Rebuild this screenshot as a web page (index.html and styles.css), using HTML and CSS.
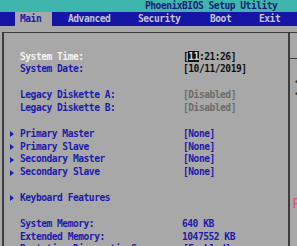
FILE: index.html
```html
<!DOCTYPE html>
<html>
<head>
<meta charset="utf-8">
<link rel="stylesheet" href="styles.css">
</head>
<body>
<div class="title">PhoenixBIOS Setup Utility</div>
<div class="menu">
  <span class="tab tab-main active">Main</span>
  <span class="tab tab-adv">Advanced</span>
  <span class="tab tab-sec">Security</span>
  <span class="tab tab-boot">Boot</span>
  <span class="tab tab-exit">Exit</span>
</div>
<div class="screen">
  <div class="main">
    <div class="row"><span class="bullet"></span><span class="label current">System Time:</span><span class="value black">[<span class="cursor">11</span>:21:26]</span></div>
    <div class="row"><span class="bullet"></span><span class="label">System Date:</span><span class="value black">[10/11/2019]</span></div>
    <div class="row"></div>
    <div class="row"><span class="bullet"></span><span class="label">Legacy Diskette A:</span><span class="value gray">[Disabled]</span></div>
    <div class="row"><span class="bullet"></span><span class="label">Legacy Diskette B:</span><span class="value gray">[Disabled]</span></div>
    <div class="row"></div>
    <div class="row"><span class="bullet"><svg class="tri" viewBox="0 0 4 6"><polygon points="0,0 4,3 0,6"/></svg></span><span class="label">Primary Master</span><span class="value">[None]</span></div>
    <div class="row"><span class="bullet"><svg class="tri" viewBox="0 0 4 6"><polygon points="0,0 4,3 0,6"/></svg></span><span class="label">Primary Slave</span><span class="value">[None]</span></div>
    <div class="row"><span class="bullet"><svg class="tri" viewBox="0 0 4 6"><polygon points="0,0 4,3 0,6"/></svg></span><span class="label">Secondary Master</span><span class="value">[None]</span></div>
    <div class="row"><span class="bullet"><svg class="tri" viewBox="0 0 4 6"><polygon points="0,0 4,3 0,6"/></svg></span><span class="label">Secondary Slave</span><span class="value">[None]</span></div>
    <div class="row"></div>
    <div class="row"><span class="bullet"><svg class="tri" viewBox="0 0 4 6"><polygon points="0,0 4,3 0,6"/></svg></span><span class="label">Keyboard Features</span></div>
    <div class="row"></div>
    <div class="row"><span class="bullet"></span><span class="label">System Memory:</span><span class="value mem">640 KB</span></div>
    <div class="row"><span class="bullet"></span><span class="label">Extended Memory:</span><span class="value mem">1047552 KB</span></div>
    <div class="row"><span class="bullet"></span><span class="label">Boot-time Diagnostic Screen:</span><span class="value">[Enabled]</span></div>
  </div>
  <div class="help">
    <div class="help-head"></div>
    <div class="help-body">
      <div class="help-line">&lt;Enter&gt;</div>
      <div class="help-line">&lt;Tab&gt;</div>
      <div class="help-mark">F</div>
    </div>
  </div>
</div>
</body>
</html>
```
FILE: styles.css
```css
html, body {
  margin: 0;
  padding: 0;
}
body {
  width: 297px;
  height: 246px;
  overflow: hidden;
  background: #a8a8a8;
  font-family: "DejaVu Sans Mono", "Liberation Mono", monospace;
  font-weight: bold;
  font-size: 9.6px;
  letter-spacing: -0.48px;
}
.title {
  height: 12px;
  line-height: 12px;
  background: #3fb6ad;
  color: #1c1c78;
  padding-left: 145px;
  white-space: nowrap;
}
.menu {
  height: 14px;
  line-height: 14px;
  background: #1616a6;
  display: flex;
  padding-left: 15px;
  white-space: nowrap;
}
.tab {
  color: #c4c4d4;
  padding-left: 5px;
  box-sizing: border-box;
}
.tab.active {
  background: #a8a8a8;
  color: #1c1caa;
}
.tab-main { width: 37px; }
.tab-adv { margin-left: 11px; width: 70px; }
.tab-sec { width: 72px; }
.tab-boot { width: 49px; }
.tab-exit { width: 40px; }

.screen {
  display: flex;
  margin-top: 6px;
  margin-left: 2px;
  height: 214px;
}
.main {
  width: 284px;
  flex: none;
  border-top: 1px solid #3c3c3c;
  border-left: 2px solid #3c3c3c;
  padding-top: 17.5px;
}
.row {
  height: 12.86px;
  line-height: 12.86px;
  display: flex;
  white-space: nowrap;
}
.bullet {
  width: 16px;
  flex: none;
  display: flex;
  align-items: center;
  padding-left: 6px;
  box-sizing: border-box;
}
.tri {
  width: 4px;
  height: 6px;
  fill: #1c1caa;
}
.label {
  width: 163px;
  flex: none;
  color: #1c1caa;
}
.label.current {
  color: #f4f4f4;
}
.value {
  color: #1c1caa;
}
.value.black { color: #101010; }
.value.gray { color: #6c6c6c; }
.value.mem { margin-left: -1px; }
.cursor {
  background: #101010;
  color: #d8d8d8;
}
.help {
  flex: 1;
  border-top: 1px solid #3c3c3c;
  border-left: 2px solid #3c3c3c;
  overflow: hidden;
  white-space: nowrap;
}
.help-head {
  height: 25px;
  border-bottom: 1px solid #3c3c3c;
}
.help-body {
  padding-top: 16.6px;
}
.help-line {
  height: 12.86px;
  line-height: 12.86px;
  padding-left: 5px;
  color: #303030;
}
.help-mark {
  margin-top: 96px;
  padding-left: 2.5px;
  height: 13px;
  line-height: 13px;
  font-family: "Liberation Sans", sans-serif;
  font-weight: normal;
  font-size: 14px;
  color: #e2506e;
}
```
